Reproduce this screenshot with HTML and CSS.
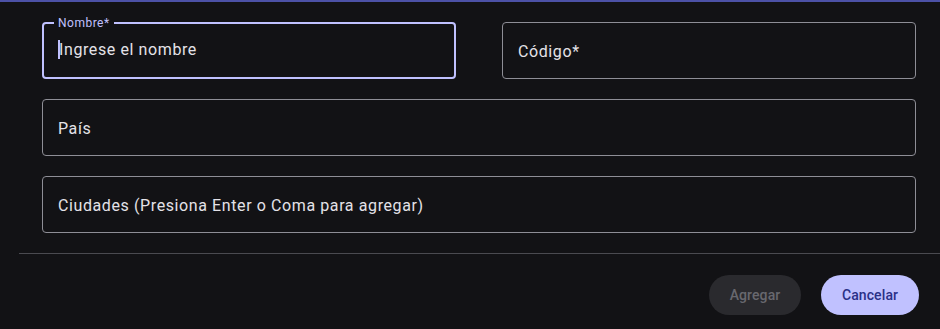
FILE: index.html
```html
<!DOCTYPE html>
<html lang="es">
<head>
<meta charset="utf-8">
<title>Formulario</title>
<link rel="stylesheet" href="styles.css">
</head>
<body>
<div class="dialog">
  <div class="form">
    <div class="row two">
      <div class="field focused">
        <span class="float-label">Nombre*</span>
        <span class="caret"></span><span class="value">Ingrese el nombre</span>
      </div>
      <div class="field"><span class="label">Código*</span></div>
    </div>
    <div class="field"><span class="label">País</span></div>
    <div class="field"><span class="label">Ciudades (Presiona Enter o Coma para agregar)</span></div>
  </div>
  <div class="divider"></div>
  <div class="actions">
    <button class="btn disabled">Agregar</button>
    <button class="btn primary">Cancelar</button>
  </div>
</div>
</body>
</html>
```
FILE: styles.css
```css
html, body {
  margin: 0;
  padding: 0;
  background: #121215;
  font-family: Roboto, "Noto Sans", sans-serif;
}
.dialog {
  border-top: 2px solid #4c51a6;
  height: 327px;
  box-sizing: border-box;
  padding-top: 20px;
}
.form {
  display: flex;
  flex-direction: column;
  gap: 20px;
  margin-left: 42px;
  width: 874px;
}
.row.two {
  display: grid;
  grid-template-columns: 414px 414px;
  column-gap: 46px;
}
.field {
  position: relative;
  height: 57px;
  box-sizing: border-box;
  border: 1px solid #8e8e96;
  border-radius: 4px;
  display: flex;
  align-items: center;
  padding-left: 15px;
  font-size: 16px;
  color: #e4e2e8;
  letter-spacing: 0.6px;
}
.field.focused {
  border: 2px solid #c0c1ff;
  padding-left: 14px;
}
.field .label {
  margin-top: 2px;
}
.float-label {
  position: absolute;
  top: -9px;
  left: 10px;
  padding: 0 4px;
  background: #121215;
  font-size: 12px;
  line-height: 16px;
  color: #c0c1ff;
  letter-spacing: 0.5px;
}
.caret {
  display: inline-block;
  width: 2px;
  height: 19px;
  background: #c0c1ff;
  margin-right: -1px;
  margin-top: -2px;
}
.value {
  margin-top: -2px;
}
.divider {
  margin: 20px 0 0 19px;
  height: 1px;
  background: #4a4a50;
}
.actions {
  display: flex;
  justify-content: flex-end;
  gap: 20px;
  padding: 21px 21px 0 0;
}
.btn {
  height: 40px;
  border: none;
  border-radius: 20px;
  font-family: Roboto, "Noto Sans", sans-serif;
  font-size: 14px;
  font-weight: 500;
  letter-spacing: 0.1px;
  padding: 0 20px;
}
.btn.disabled {
  width: 92px;
  background: #2a2a2e;
  color: #68686e;
}
.btn.primary {
  width: 98px;
  background: #c0c1ff;
  color: #2a3087;
}
```
